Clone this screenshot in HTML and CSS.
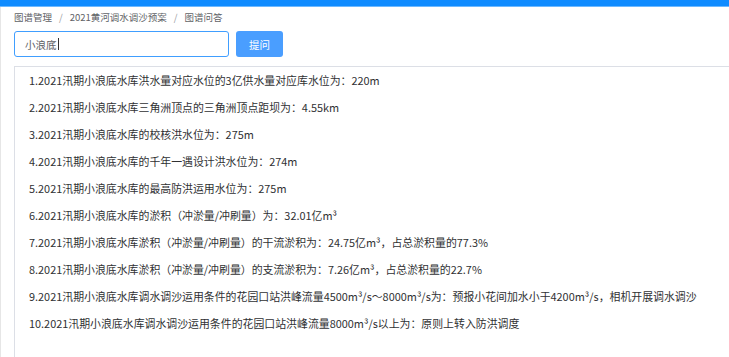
FILE: index.html
```html
<!DOCTYPE html>
<html lang="zh-CN">
<head>
<meta charset="utf-8">
<title>图谱问答</title>
<link rel="stylesheet" href="styles.css">
</head>
<body>
<div class="topbar"></div>
<div class="page">
  <nav class="breadcrumb">
    <span class="crumb">图谱管理</span><span class="sep">/</span><span class="crumb">2021黄河调水调沙预案</span><span class="sep">/</span><span class="crumb">图谱问答</span>
  </nav>
  <div class="search">
    <div class="input"><span class="value">小浪底</span><span class="caret"></span></div>
    <button class="btn">提问</button>
  </div>
  <div class="answers">
    <div class="item">1.2021汛期小浪底水库洪水量对应水位的3亿供水量对应库水位为：220m</div>
    <div class="item">2.2021汛期小浪底水库三角洲顶点的三角洲顶点距坝为：4.55km</div>
    <div class="item">3.2021汛期小浪底水库的校核洪水位为：275m</div>
    <div class="item">4.2021汛期小浪底水库的千年一遇设计洪水位为：274m</div>
    <div class="item">5.2021汛期小浪底水库的最高防洪运用水位为：275m</div>
    <div class="item">6.2021汛期小浪底水库的淤积（冲淤量/冲刷量）为：32.01亿m³</div>
    <div class="item">7.2021汛期小浪底水库淤积（冲淤量/冲刷量）的干流淤积为：24.75亿m³，占总淤积量的77.3%</div>
    <div class="item">8.2021汛期小浪底水库淤积（冲淤量/冲刷量）的支流淤积为：7.26亿m³，占总淤积量的22.7%</div>
    <div class="item">9.2021汛期小浪底水库调水调沙运用条件的花园口站洪峰流量4500m³/s～8000m³/s为：预报小花间加水小于4200m³/s，相机开展调水调沙</div>
    <div class="item">10.2021汛期小浪底水库调水调沙运用条件的花园口站洪峰流量8000m³/s以上为：原则上转入防洪调度</div>
  </div>
</div>
</body>
</html>
```

FILE: styles.css
```css
html, body {
  margin: 0;
  padding: 0;
  background: #fff;
  font-family: "Noto Sans CJK SC", "Noto Sans", sans-serif;
  overflow: hidden;
}
.topbar {
  height: 6px;
  background: #0f8bff;
  border-bottom: 1px solid #6db8ff;
}
.page {
  padding-left: 13px;
  border-left: 1px solid #e6e6e6;
  height: 350px;
}
.breadcrumb {
  height: 20px;
  line-height: 20px;
  font-size: 9.5px;
  color: #606266;
  display: flex;
  align-items: center;
}
.sep {
  margin: 0 7px;
  color: #9a9ca1;
}
.search {
  margin-top: 4px;
  display: flex;
  gap: 7px;
  height: 26px;
}
.input {
  width: 215px;
  box-sizing: border-box;
  border: 1px solid #409eff;
  border-radius: 3px;
  display: flex;
  align-items: center;
  padding-left: 10px;
  font-size: 10.5px;
  color: #606266;
}
.caret {
  width: 1px;
  height: 12px;
  background: #333;
  margin-left: 1px;
}
.btn {
  width: 47px;
  height: 26px;
  border: none;
  border-radius: 3px;
  background: #4a9eff;
  color: #fff;
  font-family: inherit;
  font-size: 10.5px;
  padding: 0;
}
.answers {
  margin-top: 9px;
  border-top: 1px solid #dcdfe6;
  border-left: 1px solid #dcdfe6;
  padding-left: 14px;
  height: 300px;
}
.item {
  line-height: 27px;
  font-size: 10.9px;
  color: #303133;
  white-space: nowrap;
}
```
